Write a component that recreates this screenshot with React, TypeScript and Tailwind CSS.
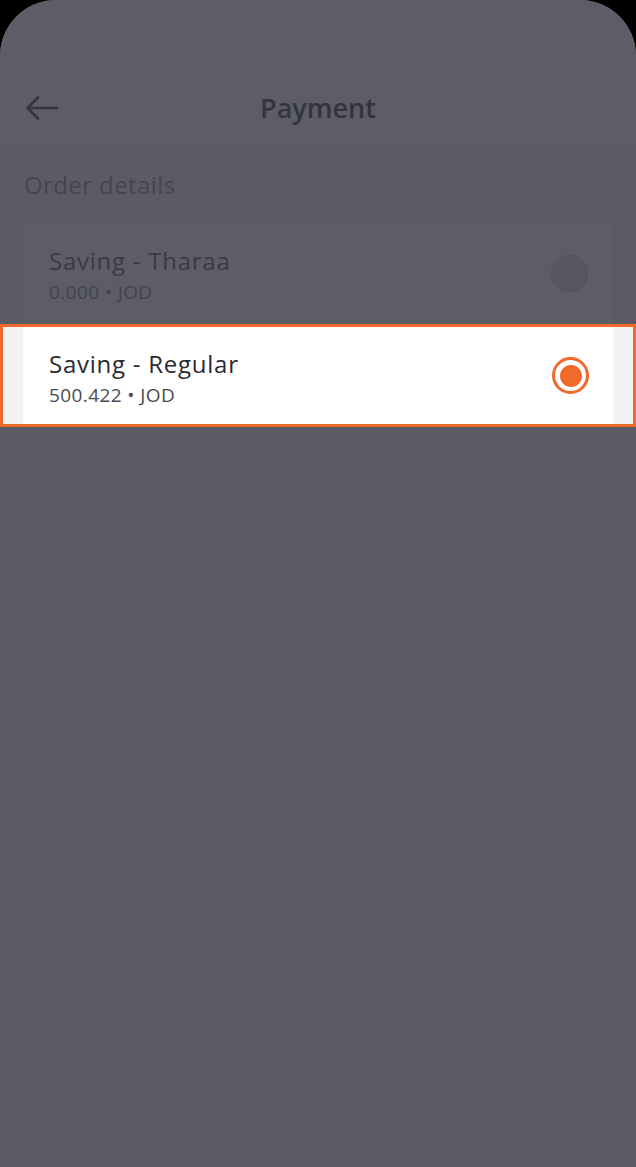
type Account = { name: string; balance: string; currency: string; selected: boolean };

const ACCOUNTS: Account[] = [
  { name: 'Saving - Tharaa', balance: '0.000', currency: 'JOD', selected: false },
  { name: 'Saving - Regular', balance: '500.422', currency: 'JOD', selected: true },
];

function Radio({ on }: { on: boolean }) {
  if (!on) {
    return <span className="w-[37px] h-[37px] rounded-full bg-[#575761] border border-[#52525c] shrink-0" />;
  }
  return (
    <span className="w-[37px] h-[37px] rounded-full border-[3px] border-[#f26a2b] bg-white flex items-center justify-center shrink-0">
      <span className="w-[22px] h-[22px] rounded-full bg-[#f26a2b]" />
    </span>
  );
}

function BackArrow() {
  return (
    <svg width="34" height="26" viewBox="0 0 34 26" fill="none" stroke="#34343e" strokeWidth="2.6" strokeLinecap="round" strokeLinejoin="round">
      <path d="M32 13H3" />
      <path d="M13 2.5L2.5 13L13 23.5" />
    </svg>
  );
}

export default function App() {
  const [dim, lit] = ACCOUNTS;
  return (
    <div className="w-full h-[1167px] bg-black overflow-hidden font-['Open_Sans',_'Noto_Sans',_sans-serif]">
      <div className="h-full rounded-t-[56px] bg-[#5b5b65] flex flex-col">
        {/* header */}
        <div className="h-[150px] bg-[#5d5d67] rounded-t-[56px] flex items-end">
          <div className="relative w-full h-[48px] mb-[18px] flex items-center justify-center">
            <span className="absolute left-[25px] top-[11px]">
              <BackArrow />
            </span>
            <h1 className="text-[27px] leading-[36px] font-semibold text-[#34343e]">Payment</h1>
          </div>
        </div>

        <p className="px-6 mt-[21px] text-[24px] leading-[28px] tracking-[0.4px] text-[#45454f]">Order details</p>

        <div className="mt-[23px]">
          {/* unselected row, under the dim overlay */}
          <div className="mx-6 h-[103px] bg-[#5d5d67] flex items-center justify-between pl-[25px] pr-[24px]">
            <div className="pt-[3px]">
              <div className="text-[24px] leading-[30px] font-medium tracking-[0.75px] text-[#3a3a44]">{dim.name}</div>
              <div className="mt-[4px] text-[19px] leading-[24px] tracking-[0.4px] text-[#43434d]">
                {dim.balance} • {dim.currency}
              </div>
            </div>
            <Radio on={dim.selected} />
          </div>

          {/* highlighted row */}
          <div className="-mt-px h-[103px] border-[3px] border-[#f26a2b] bg-[#f2f2f4] px-[20px]">
            <div className="h-full bg-white flex items-center justify-between pl-[26px] pr-[24px]">
              <div className="pt-[5px]">
                <div className="text-[24px] leading-[30px] font-medium tracking-[0.75px] text-[#2a2a32]">{lit.name}</div>
                <div className="mt-[4px] text-[19px] leading-[24px] tracking-[0.4px] text-[#4a4a52]">
                  {lit.balance} • {lit.currency}
                </div>
              </div>
              <Radio on={lit.selected} />
            </div>
          </div>
        </div>

        <div className="flex-1" />
      </div>
    </div>
  );
}
